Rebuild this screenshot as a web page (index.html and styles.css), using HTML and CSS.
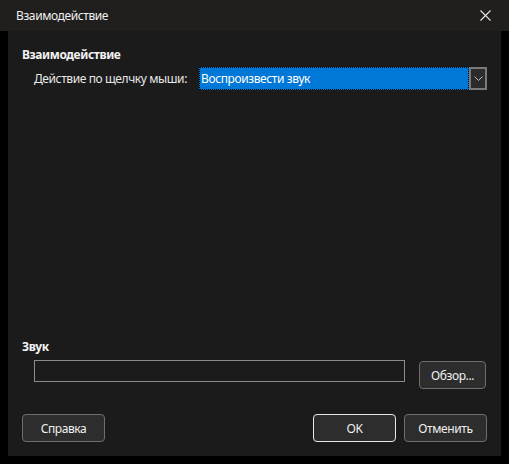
FILE: index.html
```html
<!DOCTYPE html>
<html lang="ru">
<head>
<meta charset="utf-8">
<title>Взаимодействие</title>
<link rel="stylesheet" href="styles.css">
</head>
<body>
<div class="window">
  <div class="titlebar">
    <span class="title">Взаимодействие</span>
    <svg class="close" width="11" height="11" viewBox="0 0 11 11">
      <path d="M0.5 0.5 L10.5 10.5 M10.5 0.5 L0.5 10.5" stroke="#e6e6e6" stroke-width="1.1" fill="none"/>
    </svg>
  </div>
  <div class="panel">
    <section class="group action">
      <h2 class="group-title">Взаимодействие</h2>
      <div class="row">
        <label class="label">Действие по щелчку мыши:</label>
        <div class="combo">
          <div class="combo-value"><span>Воспроизвести звук</span></div>
          <div class="combo-arrow">
            <svg width="9" height="5" viewBox="0 0 9 5"><path d="M0.5 0.5 L4.5 4.5 L8.5 0.5" stroke="#bdbdbd" stroke-width="1" fill="none"/></svg>
          </div>
        </div>
      </div>
    </section>
    <section class="group sound">
      <h2 class="group-title">Звук</h2>
      <div class="row file-row">
        <div class="textbox"></div>
        <button class="btn browse">Обзор...</button>
      </div>
    </section>
    <div class="footer">
      <button class="btn">Справка</button>
      <div class="footer-right">
        <button class="btn default">OK</button>
        <button class="btn">Отменить</button>
      </div>
    </div>
  </div>
</div>
</body>
</html>
```
FILE: styles.css
```css
html, body {
  margin: 0;
  padding: 0;
  background: #000;
}

body {
  width: 509px;
  height: 464px;
  font-family: "Noto Sans", "Open Sans", sans-serif;
  font-size: 12px;
  letter-spacing: -0.4px;
  color: #f2f2f2;
}

.titlebar {
  height: 31px;
  background: #201f1e;
  display: flex;
  align-items: center;
  justify-content: space-between;
  padding: 0 18px 0 16px;
}

.title {
  font-size: 12px;
  color: #f0f0f0;
  margin-top: -1px;
}

.close {
  margin-top: -1px;
}

.panel {
  margin: 0 8px;
  height: 425px;
  background: #1b1b1b;
  box-sizing: border-box;
  padding: 16px 14px 0 14px;
  display: flex;
  flex-direction: column;
}

.group-title {
  margin: 0;
  font-size: 12px;
  font-weight: 700;
  line-height: 16px;
  color: #f2f2f2;
}

.row {
  display: flex;
  align-items: center;
}

.action .row {
  margin-top: 4px;
  padding-left: 12px;
}

.label {
  width: 165px;
  color: #e8e8e8;
}

.combo {
  display: flex;
  width: 288px;
  height: 23px;
}

.combo-value {
  flex: 1;
  background: #0078d7;
  border: 1px dotted #fff;
  outline: 1px dotted #000;
  outline-offset: -1px;
  display: flex;
  align-items: center;
  padding-left: 1px;
  color: #fff;
}

.combo-arrow {
  width: 14px;
  border: 2px solid #7a7a7a;
  background: #2b2b2b;
  display: flex;
  align-items: center;
  justify-content: center;
}

.sound {
  margin-top: auto;
}

.file-row {
  margin-top: 5px;
  padding-left: 12px;
  align-items: flex-start;
}

.textbox {
  width: 369px;
  height: 20px;
  border: 1px solid #8c8c8c;
  background: #1b1b1b;
}

.btn {
  font-family: inherit;
  font-size: 12px;
  letter-spacing: -0.4px;
  color: #f0f0f0;
  background: #2d2d2d;
  border: 1px solid #6e6e6e;
  border-radius: 4px;
  width: 83px;
  height: 28px;
  padding: 0;
}

.browse {
  width: 67px;
  margin-left: 14px;
  margin-top: 1px;
}

.footer {
  display: flex;
  justify-content: space-between;
  margin-top: 25px;
  margin-bottom: 14px;
}

.footer-right {
  display: flex;
  gap: 8px;
}

.btn.default {
  border-color: #e8e8e8;
}
```
